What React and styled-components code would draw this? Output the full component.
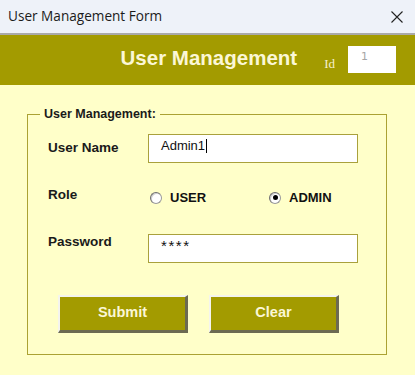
import React from "react";
import styled, { createGlobalStyle } from "styled-components";

const Global = createGlobalStyle`
  html, body { margin: 0; padding: 0; background: #ffffc9; }
  * { box-sizing: border-box; }
`;

const Window = styled.div`
  width: 415px;
  height: 375px;
  overflow: hidden;
  background: #ffffc9;
  display: flex;
  flex-direction: column;
  font-family: "Liberation Sans", Arial, sans-serif;
`;

const TitleBar = styled.div`
  height: 35px;
  flex: none;
  background: #eef2f9;
  border-bottom: 2px solid #a9a9a9;
  display: flex;
  align-items: center;
  justify-content: space-between;
  padding: 0 12px 2px 8px;
`;

const TitleText = styled.span`
  font-family: "Open Sans", "Noto Sans", sans-serif;
  font-size: 13.6px;
  color: #1b1b1b;
`;

const CloseIcon = styled.svg`
  width: 12px;
  height: 12px;
  margin-top: 2px;
`;

const Header = styled.div`
  height: 50px;
  flex: none;
  background: #a39b00;
  display: flex;
  align-items: center;
  justify-content: flex-end;
  padding-right: 19px;
`;

const HeaderTitle = styled.span`
  font-family: "Liberation Sans", Arial, sans-serif;
  font-weight: bold;
  font-size: 20.5px;
  color: #fbf7d6;
  margin-right: 27px;
  margin-top: -4px;
`;

const IdLabel = styled.span`
  font-family: "Liberation Serif", "Times New Roman", serif;
  font-size: 13px;
  color: #f6f1cf;
  margin-right: 13px;
  margin-top: 8px;
`;

const IdBox = styled.div`
  width: 48px;
  height: 27px;
  background: #ffffff;
  color: #a6a6a6;
  font-family: "DejaVu Sans", sans-serif;
  font-size: 11px;
  padding: 4px 0 0 13px;
  margin-top: -1px;
`;

const Body = styled.div`
  padding: 22px 28px 0 27px;
`;

const Fieldset = styled.fieldset`
  margin: 0;
  width: 360px;
  padding: 0 0 21px 0;
  border: 1px solid #aba233;
  min-width: 0;
`;

const Legend = styled.legend`
  font-family: "Liberation Sans", Arial, sans-serif;
  font-weight: bold;
  font-size: 12.5px;
  line-height: 14px;
  color: #1a1a1a;
  padding: 0 4px;
  margin-left: 12px;
`;

const Rows = styled.div`
  display: flex;
  flex-direction: column;
  padding: 13px 0 0 20px;
`;

const Row = styled.div`
  display: flex;
  align-items: ${(p) => (p.$top ? "flex-start" : "center")};
  height: ${(p) => p.$h}px;
  margin-top: ${(p) => p.$mt || 0}px;
`;

const Label = styled.span`
  width: 100px;
  flex: none;
  font-weight: bold;
  font-size: 13.5px;
  line-height: 16px;
  color: #1a1a1a;
  margin-top: ${(p) => p.$mt || 0}px;
`;

const Field = styled.div`
  width: 210px;
  height: 29px;
  background: #ffffff;
  border: 1px solid #a9a13c;
  padding: ${(p) => (p.$pw ? "3px 12px" : "3px 12px")};
  font-family: "Liberation Sans", Tahoma, sans-serif;
  font-size: ${(p) => (p.$pw ? "15px" : "13px")};
  line-height: 16px;
  color: #111;
  display: flex;
  align-items: flex-start;
  letter-spacing: ${(p) => (p.$pw ? "1.6px" : "0")};
`;

const Caret = styled.span`
  display: inline-block;
  width: 1px;
  height: 14px;
  background: #000;
  margin: 1px 0 0 1px;
`;

const RadioOption = styled.div`
  width: 120px;
  display: flex;
  align-items: center;
  gap: 8px;
  padding-left: 2px;
  font-weight: bold;
  font-size: 13px;
  color: #111;
  margin-top: 3px;
`;

const RadioCircle = styled.span`
  width: 12px;
  height: 12px;
  border-radius: 50%;
  background: #fff;
  border: 1px solid #9a9a9a;
  border-top-color: #6e6e6e;
  border-left-color: #6e6e6e;
  box-shadow: inset 1px 1px 0 #d0d0d0;
  display: flex;
  align-items: center;
  justify-content: center;
  flex: none;
  &::after {
    content: "";
    width: 5px;
    height: 5px;
    border-radius: 50%;
    background: ${(p) => (p.$checked ? "#000" : "transparent")};
  }
`;

const ButtonRow = styled.div`
  display: flex;
  gap: 21px;
  margin: 32px 0 0 30px;
`;

const Button = styled.button`
  width: 130px;
  height: 38px;
  background: #a39b00;
  border-style: solid;
  border-width: 2px 3px 3px 2px;
  border-color: #f4f4ee #6c6a52 #6c6a52 #f4f4ee;
  color: #fbf7d6;
  font-family: "Liberation Sans", Arial, sans-serif;
  font-weight: bold;
  font-size: 14.5px;
  padding: 0 0 3px 0;
  cursor: pointer;
`;

export default function App() {
  return (
    <>
      <Global />
      <Window>
        <TitleBar>
          <TitleText>User Management Form</TitleText>
          <CloseIcon viewBox="0 0 12 12">
            <path d="M0.5 0.5 L11.5 11.5 M11.5 0.5 L0.5 11.5" stroke="#222" strokeWidth="1.1" fill="none" />
          </CloseIcon>
        </TitleBar>
        <Header>
          <HeaderTitle>User Management</HeaderTitle>
          <IdLabel>Id</IdLabel>
          <IdBox>1</IdBox>
        </Header>
        <Body>
          <Fieldset>
            <Legend>User Management:</Legend>
            <Rows>
              <Row $h={29}>
                <Label $mt={-2}>User Name</Label>
                <Field>
                  Admin1
                  <Caret />
                </Field>
              </Row>
              <Row $h={24} $mt={21}>
                <Label $mt={-3}>Role</Label>
                <RadioOption>
                  <RadioCircle />
                  USER
                </RadioOption>
                <RadioOption>
                  <RadioCircle $checked />
                  ADMIN
                </RadioOption>
              </Row>
              <Row $h={29} $mt={26} $top>
                <Label $mt={0}>Password</Label>
                <Field $pw>****</Field>
              </Row>
            </Rows>
            <ButtonRow>
              <Button>Submit</Button>
              <Button>Clear</Button>
            </ButtonRow>
          </Fieldset>
        </Body>
      </Window>
    </>
  );
}
